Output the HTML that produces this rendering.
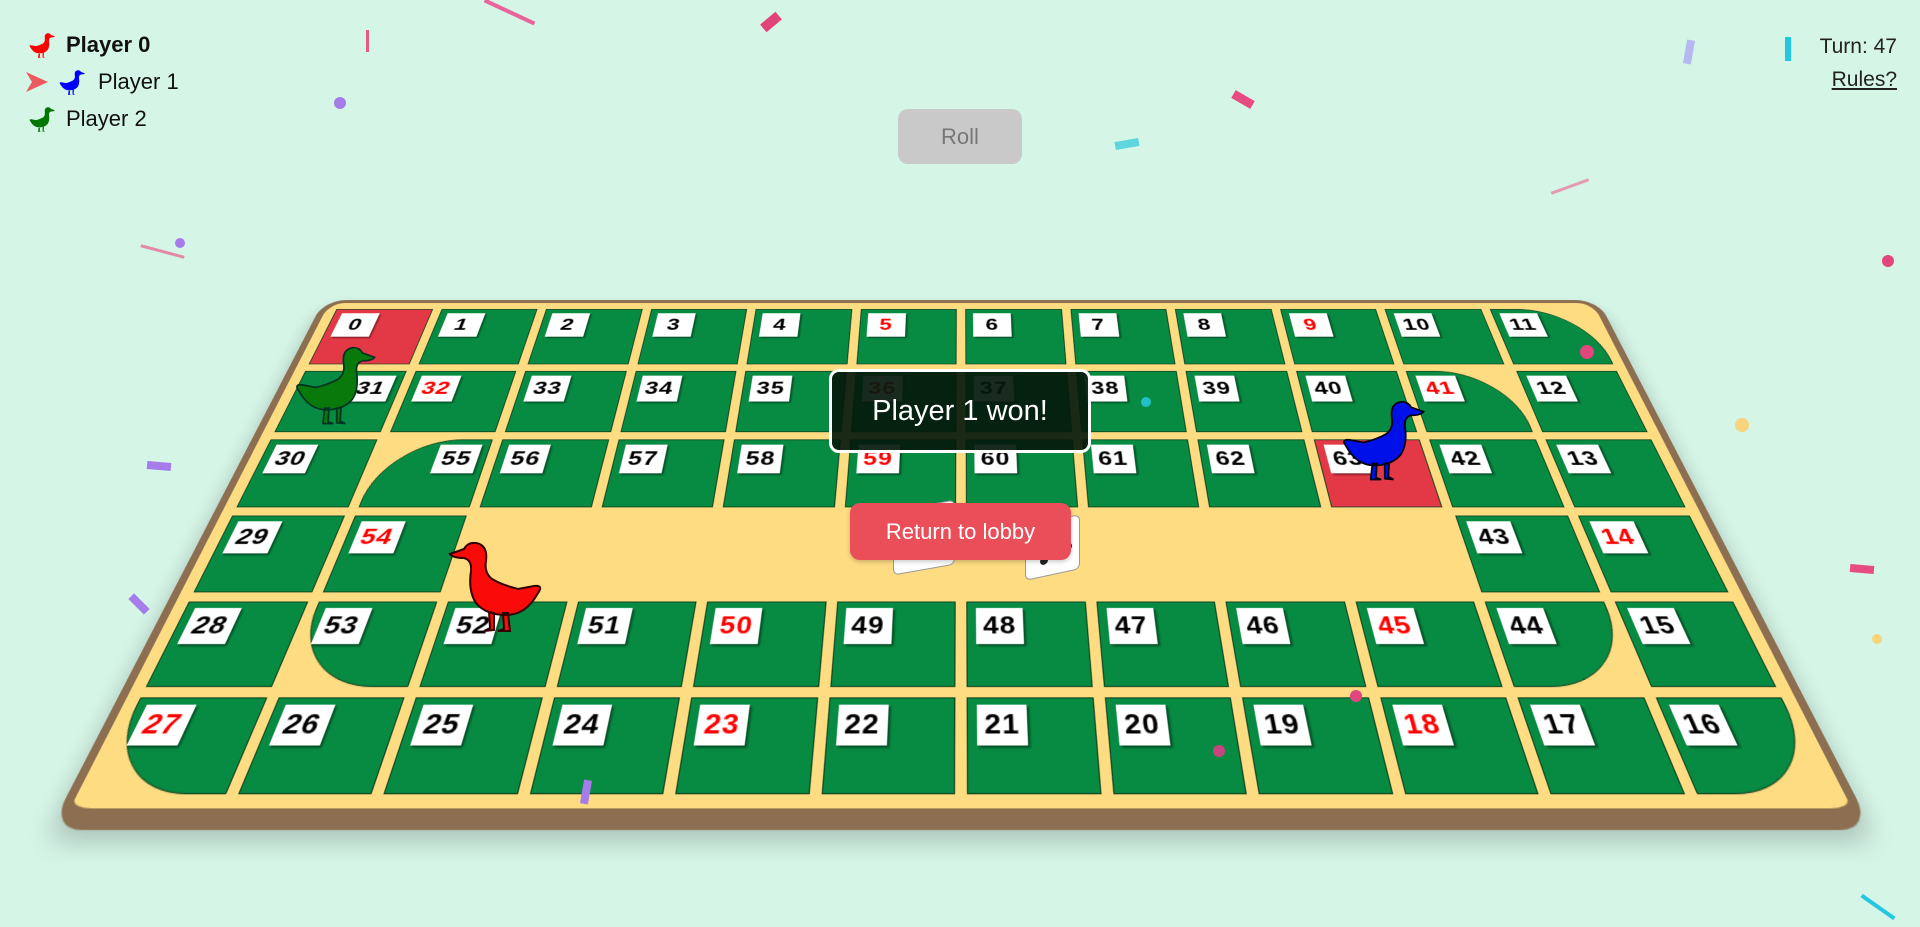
<!DOCTYPE html>
<html><head><meta charset="utf-8">
<style>
*{box-sizing:border-box;margin:0;padding:0}
body{width:1920px;height:927px;overflow:hidden;background:#d5f5e7;font-family:"Liberation Sans",sans-serif;position:relative}
.scene{position:absolute;left:0;top:0;width:1920px;height:927px;perspective:1000px;perspective-origin:961px 518px}
.board{position:absolute;left:211px;top:206px;width:1500px;height:624px;transform:rotateX(34.66deg);transform-origin:50% 50%;background:#fedc82;border:8px solid #8c6e50;border-top-width:5px;border-bottom-width:18px;border-radius:26px;padding:10px 12px 12px 12px;display:grid;grid-template-columns:repeat(12,1fr);grid-template-rows:repeat(6,1fr);gap:10px;box-shadow:0 10px 20px rgba(0,0,0,.2)}
.c{background:#078a42;border:1.5px solid #0c3d1c;position:relative}
.c.red{background:#e33846}
.l{position:absolute;left:8px;top:6px;background:#fff;color:#000;font-weight:bold;font-size:26px;line-height:36px;height:38px;min-width:44px;padding:0 6px;text-align:center;box-shadow:2px 2px 2px rgba(0,0,0,.45);letter-spacing:1px}
.l.r{color:#f00}
.l.right{left:auto;right:8px}
.tr{border-top-right-radius:80px}.br{border-bottom-right-radius:80px}.bl{border-bottom-left-radius:80px}.tl{border-top-left-radius:80px}
.players{position:absolute;left:28px;top:26px;font-size:22px;color:#111}
.players div{height:37px;display:flex;align-items:center}
.cf{position:absolute}
</style></head><body>
<div class="scene"><div class="board">
<div class="c red" style="grid-area:1/1"><span class="l">0</span></div>
<div class="c" style="grid-area:1/2"><span class="l">1</span></div>
<div class="c" style="grid-area:1/3"><span class="l">2</span></div>
<div class="c" style="grid-area:1/4"><span class="l">3</span></div>
<div class="c" style="grid-area:1/5"><span class="l">4</span></div>
<div class="c" style="grid-area:1/6"><span class="l r">5</span></div>
<div class="c" style="grid-area:1/7"><span class="l">6</span></div>
<div class="c" style="grid-area:1/8"><span class="l">7</span></div>
<div class="c" style="grid-area:1/9"><span class="l">8</span></div>
<div class="c" style="grid-area:1/10"><span class="l r">9</span></div>
<div class="c" style="grid-area:1/11"><span class="l">10</span></div>
<div class="c tr" style="grid-area:1/12"><span class="l">11</span></div>
<div class="c" style="grid-area:2/1"><span class="l right">31</span></div>
<div class="c" style="grid-area:2/2"><span class="l r">32</span></div>
<div class="c" style="grid-area:2/3"><span class="l">33</span></div>
<div class="c" style="grid-area:2/4"><span class="l">34</span></div>
<div class="c" style="grid-area:2/5"><span class="l">35</span></div>
<div class="c" style="grid-area:2/6"><span class="l r">36</span></div>
<div class="c" style="grid-area:2/7"><span class="l">37</span></div>
<div class="c" style="grid-area:2/8"><span class="l">38</span></div>
<div class="c" style="grid-area:2/9"><span class="l">39</span></div>
<div class="c" style="grid-area:2/10"><span class="l">40</span></div>
<div class="c tr" style="grid-area:2/11"><span class="l r">41</span></div>
<div class="c" style="grid-area:2/12"><span class="l">12</span></div>
<div class="c" style="grid-area:3/1"><span class="l">30</span></div>
<div class="c tl" style="grid-area:3/2"><span class="l right">55</span></div>
<div class="c" style="grid-area:3/3"><span class="l">56</span></div>
<div class="c" style="grid-area:3/4"><span class="l">57</span></div>
<div class="c" style="grid-area:3/5"><span class="l">58</span></div>
<div class="c" style="grid-area:3/6"><span class="l r">59</span></div>
<div class="c" style="grid-area:3/7"><span class="l">60</span></div>
<div class="c" style="grid-area:3/8"><span class="l">61</span></div>
<div class="c" style="grid-area:3/9"><span class="l">62</span></div>
<div class="c red" style="grid-area:3/10"><span class="l">63</span></div>
<div class="c" style="grid-area:3/11"><span class="l">42</span></div>
<div class="c" style="grid-area:3/12"><span class="l">13</span></div>
<div class="c" style="grid-area:4/1"><span class="l">29</span></div>
<div class="c" style="grid-area:4/2"><span class="l r">54</span></div>
<div class="c" style="grid-area:4/11"><span class="l">43</span></div>
<div class="c" style="grid-area:4/12"><span class="l r">14</span></div>
<div class="c" style="grid-area:5/1"><span class="l">28</span></div>
<div class="c bl" style="grid-area:5/2"><span class="l">53</span></div>
<div class="c" style="grid-area:5/3"><span class="l">52</span></div>
<div class="c" style="grid-area:5/4"><span class="l">51</span></div>
<div class="c" style="grid-area:5/5"><span class="l r">50</span></div>
<div class="c" style="grid-area:5/6"><span class="l">49</span></div>
<div class="c" style="grid-area:5/7"><span class="l">48</span></div>
<div class="c" style="grid-area:5/8"><span class="l">47</span></div>
<div class="c" style="grid-area:5/9"><span class="l">46</span></div>
<div class="c" style="grid-area:5/10"><span class="l r">45</span></div>
<div class="c br" style="grid-area:5/11"><span class="l">44</span></div>
<div class="c" style="grid-area:5/12"><span class="l">15</span></div>
<div class="c bl" style="grid-area:6/1"><span class="l r">27</span></div>
<div class="c" style="grid-area:6/2"><span class="l">26</span></div>
<div class="c" style="grid-area:6/3"><span class="l">25</span></div>
<div class="c" style="grid-area:6/4"><span class="l">24</span></div>
<div class="c" style="grid-area:6/5"><span class="l r">23</span></div>
<div class="c" style="grid-area:6/6"><span class="l">22</span></div>
<div class="c" style="grid-area:6/7"><span class="l">21</span></div>
<div class="c" style="grid-area:6/8"><span class="l">20</span></div>
<div class="c" style="grid-area:6/9"><span class="l">19</span></div>
<div class="c" style="grid-area:6/10"><span class="l r">18</span></div>
<div class="c" style="grid-area:6/11"><span class="l">17</span></div>
<div class="c br" style="grid-area:6/12"><span class="l">16</span></div>
</div></div>

<svg width="0" height="0" style="position:absolute"><defs>
<path id="g" d="M8 58 Q2 50 12 51 L28 54 Q44 50 54 44 Q62 38 60 26 Q58 10 70 8 Q78 7 82 14 L96 19 Q93 23 82 23 Q74 25 75 36 Q78 56 70 68 Q60 80 40 80 Q20 80 8 58 Z M38 78 L36 96 L48 96 L42 94 L43 78 Z M52 78 L52 95 L62 96 L56 93 L57 77 Z"/>
</defs></svg>

<div style="position:absolute;left:893px;top:505px;width:62px;height:65px;background:#fff;border:1px solid #999;border-radius:6px;transform:skewY(-10deg)"></div>
<div style="position:absolute;left:1025px;top:520px;width:55px;height:55px;background:#fff;border:1px solid #999;border-radius:6px;transform:skewY(-12deg)">
<span style="position:absolute;left:30px;top:10px;width:8px;height:8px;border-radius:50%;background:#222"></span>
<span style="position:absolute;left:38px;top:25px;width:8px;height:8px;border-radius:50%;background:#222"></span>
<span style="position:absolute;left:14px;top:34px;width:8px;height:8px;border-radius:50%;background:#222"></span>
</div>

<svg style="position:absolute;left:292px;top:340px" width="86" height="88" viewBox="0 0 100 100"><use href="#g" fill="#087a0c" stroke="#032" stroke-width="2"/></svg>
<svg style="position:absolute;left:1335px;top:395px" width="96" height="88" viewBox="0 0 100 100"><use href="#g" fill="#0010e8" stroke="#001" stroke-width="2"/></svg>
<svg style="position:absolute;left:444px;top:535px;transform:scaleX(-1)" width="104" height="100" viewBox="0 0 100 100"><use href="#g" fill="#fb0a0a" stroke="#300" stroke-width="2"/></svg>

<div style="position:absolute;left:829px;top:369px;width:262px;height:84px;background:rgba(5,25,12,.92);border:3px solid #fff;border-radius:10px;color:#fff;font-size:29px;display:flex;align-items:center;justify-content:center">Player 1 won!</div>
<div style="position:absolute;left:850px;top:503px;width:221px;height:57px;background:#ea4f59;border-radius:10px;color:#fff;font-size:22px;display:flex;align-items:center;justify-content:center;box-shadow:0 2px 4px rgba(0,0,0,.2)">Return to lobby</div>
<div style="position:absolute;left:898px;top:109px;width:124px;height:55px;background:#c9c9c9;border-radius:10px;color:#777;font-size:22px;display:flex;align-items:center;justify-content:center">Roll</div>

<div class="players">
<div><svg width="28" height="28" viewBox="0 0 100 100"><use href="#g" fill="#f00"/></svg><b style="margin-left:10px">Player 0</b></div>
<div style="margin-left:-2px"><svg width="22" height="20" viewBox="0 0 22 20"><path d="M0 0 L22 10 L0 20 L6 10 Z" fill="#ec5a5f"/></svg><svg width="28" height="28" viewBox="0 0 100 100" style="margin-left:10px"><use href="#g" fill="#00f"/></svg><span style="margin-left:12px">Player 1</span></div>
<div><svg width="28" height="28" viewBox="0 0 100 100"><use href="#g" fill="#070"/></svg><span style="margin-left:10px">Player 2</span></div>
</div>
<div style="position:absolute;right:23px;top:30px;font-size:21px;color:#222;text-align:right;line-height:33px">Turn: 47<br><u>Rules?</u></div>

<div class="cf" style="left:482px;top:10px;width:55px;height:4px;background:#e9649a;transform:rotate(25deg)"></div>
<div class="cf" style="left:766px;top:12px;width:10px;height:20px;background:#e0447a;transform:rotate(50deg)"></div>
<div class="cf" style="left:366px;top:30px;width:3px;height:22px;background:#e25b8a"></div>
<div class="cf" style="left:334px;top:97px;width:12px;height:12px;border-radius:50%;background:#a57ce9"></div>
<div class="cf" style="left:1232px;top:95px;width:22px;height:9px;background:#e64c82;transform:rotate(30deg)"></div>
<div class="cf" style="left:1115px;top:140px;width:24px;height:8px;background:#5ed6dd;transform:rotate(-10deg)"></div>
<div class="cf" style="left:1685px;top:40px;width:8px;height:24px;background:#b6b8f2;transform:rotate(10deg)"></div>
<div class="cf" style="left:1785px;top:37px;width:6px;height:24px;background:#22c8e0"></div>
<div class="cf" style="left:1550px;top:185px;width:40px;height:3px;background:#e59bb4;transform:rotate(-20deg)"></div>
<div class="cf" style="left:1882px;top:255px;width:12px;height:12px;border-radius:50%;background:#e3467f"></div>
<div class="cf" style="left:140px;top:250px;width:45px;height:3px;background:#e38aa8;transform:rotate(15deg)"></div>
<div class="cf" style="left:175px;top:238px;width:10px;height:10px;border-radius:50%;background:#a57ce9"></div>
<div class="cf" style="left:147px;top:462px;width:24px;height:8px;background:#a57ce9;transform:rotate(5deg)"></div>
<div class="cf" style="left:128px;top:600px;width:22px;height:8px;background:#a57ce9;transform:rotate(45deg)"></div>
<div class="cf" style="left:1735px;top:418px;width:14px;height:14px;border-radius:50%;background:#f8d47c"></div>
<div class="cf" style="left:1850px;top:565px;width:24px;height:8px;background:#e64c82;transform:rotate(5deg)"></div>
<div class="cf" style="left:1872px;top:634px;width:10px;height:10px;border-radius:50%;background:#f8d47c"></div>
<div class="cf" style="left:1858px;top:905px;width:40px;height:4px;background:#22c8e0;transform:rotate(35deg)"></div>
<div class="cf" style="left:1580px;top:345px;width:14px;height:14px;border-radius:50%;background:#e3467f"></div>
<div class="cf" style="left:1141px;top:397px;width:10px;height:10px;border-radius:50%;background:#22c0c8"></div>
<div class="cf" style="left:1350px;top:690px;width:12px;height:12px;border-radius:50%;background:#e3467f"></div>
<div class="cf" style="left:1213px;top:745px;width:12px;height:12px;border-radius:50%;background:#c8467f"></div>
<div class="cf" style="left:582px;top:780px;width:8px;height:24px;background:#a57ce9;transform:rotate(10deg)"></div>
</body></html>
